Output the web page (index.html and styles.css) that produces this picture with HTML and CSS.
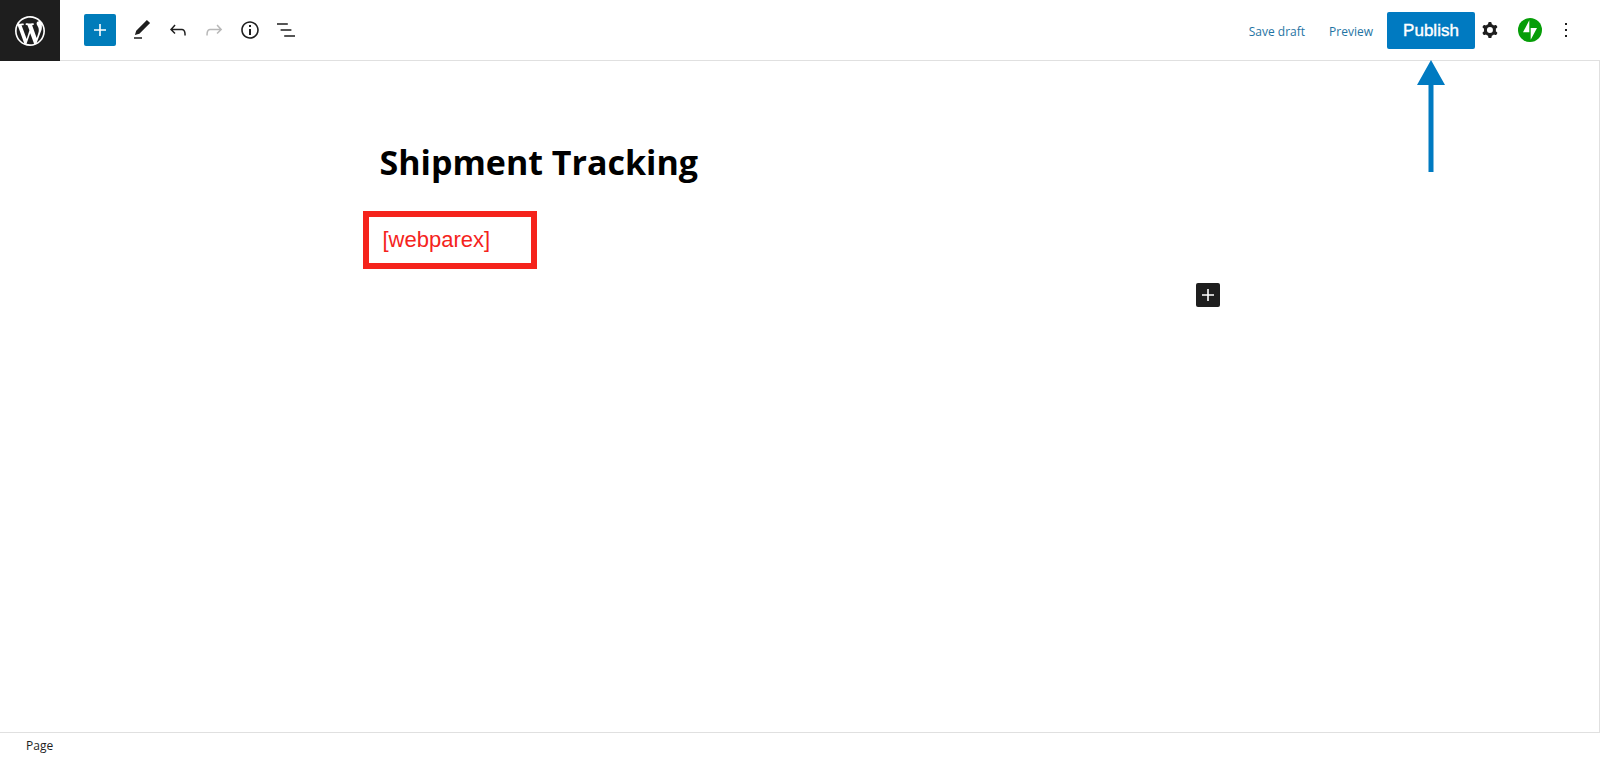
FILE: index.html
```html
<!DOCTYPE html>
<html lang="en">
<head>
<meta charset="utf-8">
<title>Edit Page</title>
<link rel="stylesheet" href="styles.css">
</head>
<body>
<div class="editor">
  <header class="header">
    <a class="site-logo" href="#" aria-label="View pages">
      <svg width="36" height="36" viewBox="-2 -2 24 24"><path d="M20 10c0-5.51-4.49-10-10-10C4.48 0 0 4.49 0 10c0 5.52 4.48 10 10 10 5.51 0 10-4.48 10-10zM7.78 15.37L4.37 6.22c.55-.02 1.17-.08 1.17-.08.5-.06.44-1.13-.06-1.11 0 0-1.45.11-2.37.11-.18 0-.37 0-.58-.01C4.12 2.69 6.87 1.11 10 1.11c2.33 0 4.45.87 6.05 2.34-.68-.11-1.65.39-1.65 1.58 0 .74.45 1.36.9 2.1.35.61.55 1.36.55 2.46 0 1.49-1.4 5-1.4 5l-3.03-8.37c.54-.02.82-.17.82-.17.5-.05.44-1.25-.06-1.22 0 0-1.44.12-2.38.12-.87 0-2.33-.12-2.33-.12-.5-.03-.56 1.2-.06 1.22l.92.08 1.26 3.41zM17.41 10c.24-.64.74-1.87.43-4.25.7 1.29 1.05 2.71 1.05 4.25 0 3.29-1.73 6.24-4.4 7.78.97-2.59 1.94-5.2 2.92-7.78zM6.1 18.09C3.12 16.65 1.11 13.53 1.11 10c0-1.3.23-2.48.72-3.59C3.25 10.3 4.67 14.2 6.1 18.09zm4.03-6.63l2.58 6.98c-.86.29-1.76.45-2.71.45-.79 0-1.57-.11-2.29-.33.81-2.38 1.62-4.74 2.42-7.1z"/></svg>
    </a>
    <div class="tools">
      <button class="inserter" type="button" aria-label="Add block"><svg width="24" height="24" viewBox="0 0 24 24"><path d="M18 11.2h-5.2V6h-1.6v5.2H6v1.6h5.2V18h1.6v-5.2H18z"/></svg></button>
      <button class="tool" type="button" aria-label="Tools"><svg width="24" height="24" viewBox="0 0 24 24"><path d="M20.1 5.1L16.9 2 6.2 12.7l-1.3 4.4 4.5-1.3L20.1 5.1zM4 20.8h8v-1.5H4v1.5z"/></svg></button>
      <button class="tool" type="button" aria-label="Undo"><svg width="24" height="24" viewBox="0 0 24 24"><path d="M18.3 11.7c-.6-.6-1.4-.9-2.3-.9H6.7l2.9-3.3-1.1-1-4.5 5L8.5 16l1-1-2.7-2.7H16c.5 0 .9.2 1.3.5 1 1 1 3.4 1 4.5v.3h1.5v-.2c0-1.5 0-4.3-1.5-5.7z"/></svg></button>
      <button class="tool" type="button" aria-label="Redo" disabled><svg width="24" height="24" viewBox="0 0 24 24"><path d="M15.6 6.5l-1.1 1 2.9 3.3H8c-.9 0-1.7.3-2.3.9-1.4 1.5-1.4 4.2-1.4 5.6v.2h1.5v-.3c0-1.1 0-3.5 1-4.5.3-.3.7-.5 1.3-.5h9.2L14.5 15l1.1 1.1 4.6-4.6-4.6-5z"/></svg></button>
      <button class="tool" type="button" aria-label="Details"><svg width="24" height="24" viewBox="0 0 24 24"><path d="M12 3.2c-4.8 0-8.8 3.9-8.8 8.8 0 4.8 3.9 8.8 8.8 8.8 4.8 0 8.8-3.9 8.8-8.8 0-4.8-4-8.8-8.8-8.8zm0 16c-4 0-7.2-3.3-7.2-7.2C4.8 8 8 4.8 12 4.8s7.2 3.3 7.2 7.2c0 4-3.2 7.2-7.2 7.2zM11 17h2v-6h-2v6zm0-8h2V7h-2v2z"/></svg></button>
      <button class="tool" type="button" aria-label="Outline"><svg width="24" height="24" viewBox="0 0 24 24"><path d="M13.8 5.2H3v1.5h10.8V5.2zm-3.6 12v1.5H21v-1.5H10.2zm7.2-6H6.6v1.5h10.8v-1.5z"/></svg></button>
    </div>
    <div class="settings">
      <button class="link" type="button">Save draft</button>
      <button class="link" type="button">Preview</button>
      <div class="publish-wrap">
        <button class="publish" type="button">Publish</button>
        <svg class="arrow" width="28" height="112" viewBox="0 0 28 112" aria-hidden="true"><path d="M14 0L28 25H16.500V112H11.500V25H0z"/></svg>
      </div>
      <button class="gear" type="button" aria-label="Settings"><svg width="24" height="24" viewBox="0 0 24 24"><path fill-rule="evenodd" d="M10.289 4.836A1 1 0 0111.275 4h1.306a1 1 0 01.987.836l.244 1.466c.787.26 1.503.679 2.108 1.218l1.393-.522a1 1 0 011.216.437l.653 1.13a1 1 0 01-.23 1.273l-1.148.944a6.025 6.025 0 010 2.435l1.149.946a1 1 0 01.23 1.272l-.653 1.13a1 1 0 01-1.216.437l-1.394-.522c-.605.54-1.32.958-2.108 1.218l-.244 1.466a1 1 0 01-.987.836h-1.306a1 1 0 01-.986-.836l-.244-1.466a5.995 5.995 0 01-2.108-1.218l-1.394.522a1 1 0 01-1.217-.436l-.653-1.131a1 1 0 01.23-1.272l1.149-.946a6.026 6.026 0 010-2.435l-1.148-.944a1 1 0 01-.23-1.272l.653-1.131a1 1 0 011.217-.437l1.393.522a5.994 5.994 0 012.108-1.218l.244-1.466zM14.929 12a3 3 0 11-6 0 3 3 0 016 0z"/></svg></button>
      <button class="jetpack" type="button" aria-label="Jetpack"><svg width="24" height="24" viewBox="0 0 24 24"><circle cx="12" cy="12" r="12" fill="#069e08"/><path fill="#fff" d="M11.300 2.200V14.300H5zM12.700 21.800V9.900H19z"/></svg></button>
      <button class="tool" type="button" aria-label="Options"><svg width="24" height="24" viewBox="0 0 24 24"><path d="M13 19h-2v-2h2v2zm0-6h-2v-2h2v2zm0-6h-2V5h2v2z"/></svg></button>
    </div>
  </header>
  <main class="canvas">
    <article class="content">
      <h1 class="title">Shipment Tracking</h1>
      <p class="shortcode">[webparex]</p>
      <button class="add-block" type="button" aria-label="Add block"><svg width="24" height="24" viewBox="0 0 24 24"><path d="M18 11.200h-5.200V6h-1.600v5.200H6v1.600h5.200V18h1.600v-5.200H18z"/></svg></button>
    </article>
  </main>
  <footer class="footer">Page</footer>
</div>
</body>
</html>
```
FILE: styles.css
```css
* { box-sizing: border-box; }
body { margin: 0; background: #fff; color: #1e1e1e; font: 12px/16px "Open Sans", sans-serif; }
button { margin: 0; padding: 0; border: 0; background: none; color: inherit; font: inherit; cursor: pointer; }
svg { display: block; fill: currentColor; }
.editor { display: flex; flex-direction: column; min-height: 100vh; }
.header { display: flex; align-items: center; height: 61px; padding-right: 16px; border-bottom: 1px solid #e0e0e0; }
.site-logo { display: flex; align-items: center; justify-content: center; width: 60px; height: 61px; margin-bottom: -1px; background: #1e1e1e; color: #fff; }
.tools { display: flex; align-items: center; padding-left: 24px; }
.inserter { display: grid; place-items: center; width: 32px; height: 32px; margin-right: 8px; border-radius: 2px; background: #007cba; color: #fff; }
.tool { display: grid; place-items: center; width: 36px; height: 36px; }
.tool:disabled { color: #b8b8b8; }
.settings { display: flex; align-items: center; margin-left: auto; }
.link { margin-right: 24px; padding-top: 4px; color: #1f74a3; }
.link + .link { margin-right: 14px; }
.publish-wrap { position: relative; }
.publish { width: 88px; height: 37px; padding-top: 2px; border-radius: 2px; background: #007ac1; color: #fff; font: 17px/20px "Liberation Sans", sans-serif; -webkit-text-stroke: 0.4px #fff; }
.arrow { position: absolute; top: 48px; left: 30px; color: #007ac1; }
.gear { margin: 0 16px 0 3px; }
.jetpack { margin-right: 6px; }
.canvas { flex: 1; border-right: 1px solid #e0e0e0; }
.content { width: 840px; margin: 0 auto; padding-top: 76px; }
.title { margin: 0; color: #000; font: 700 34px/50px "Open Sans", sans-serif; }
.shortcode { width: 174px; margin: 24px 0 14px -17px; padding: 11px 14px; border: 6px solid #f5231c; color: #f5231c; font: 22px/24px "Liberation Sans", sans-serif; }
.add-block { display: block; margin-left: auto; border-radius: 2px; background: #1e1e1e; color: #fff; }
.footer { height: 25px; padding: 5px 26px 3px; border-top: 1px solid #e0e0e0; }
```
